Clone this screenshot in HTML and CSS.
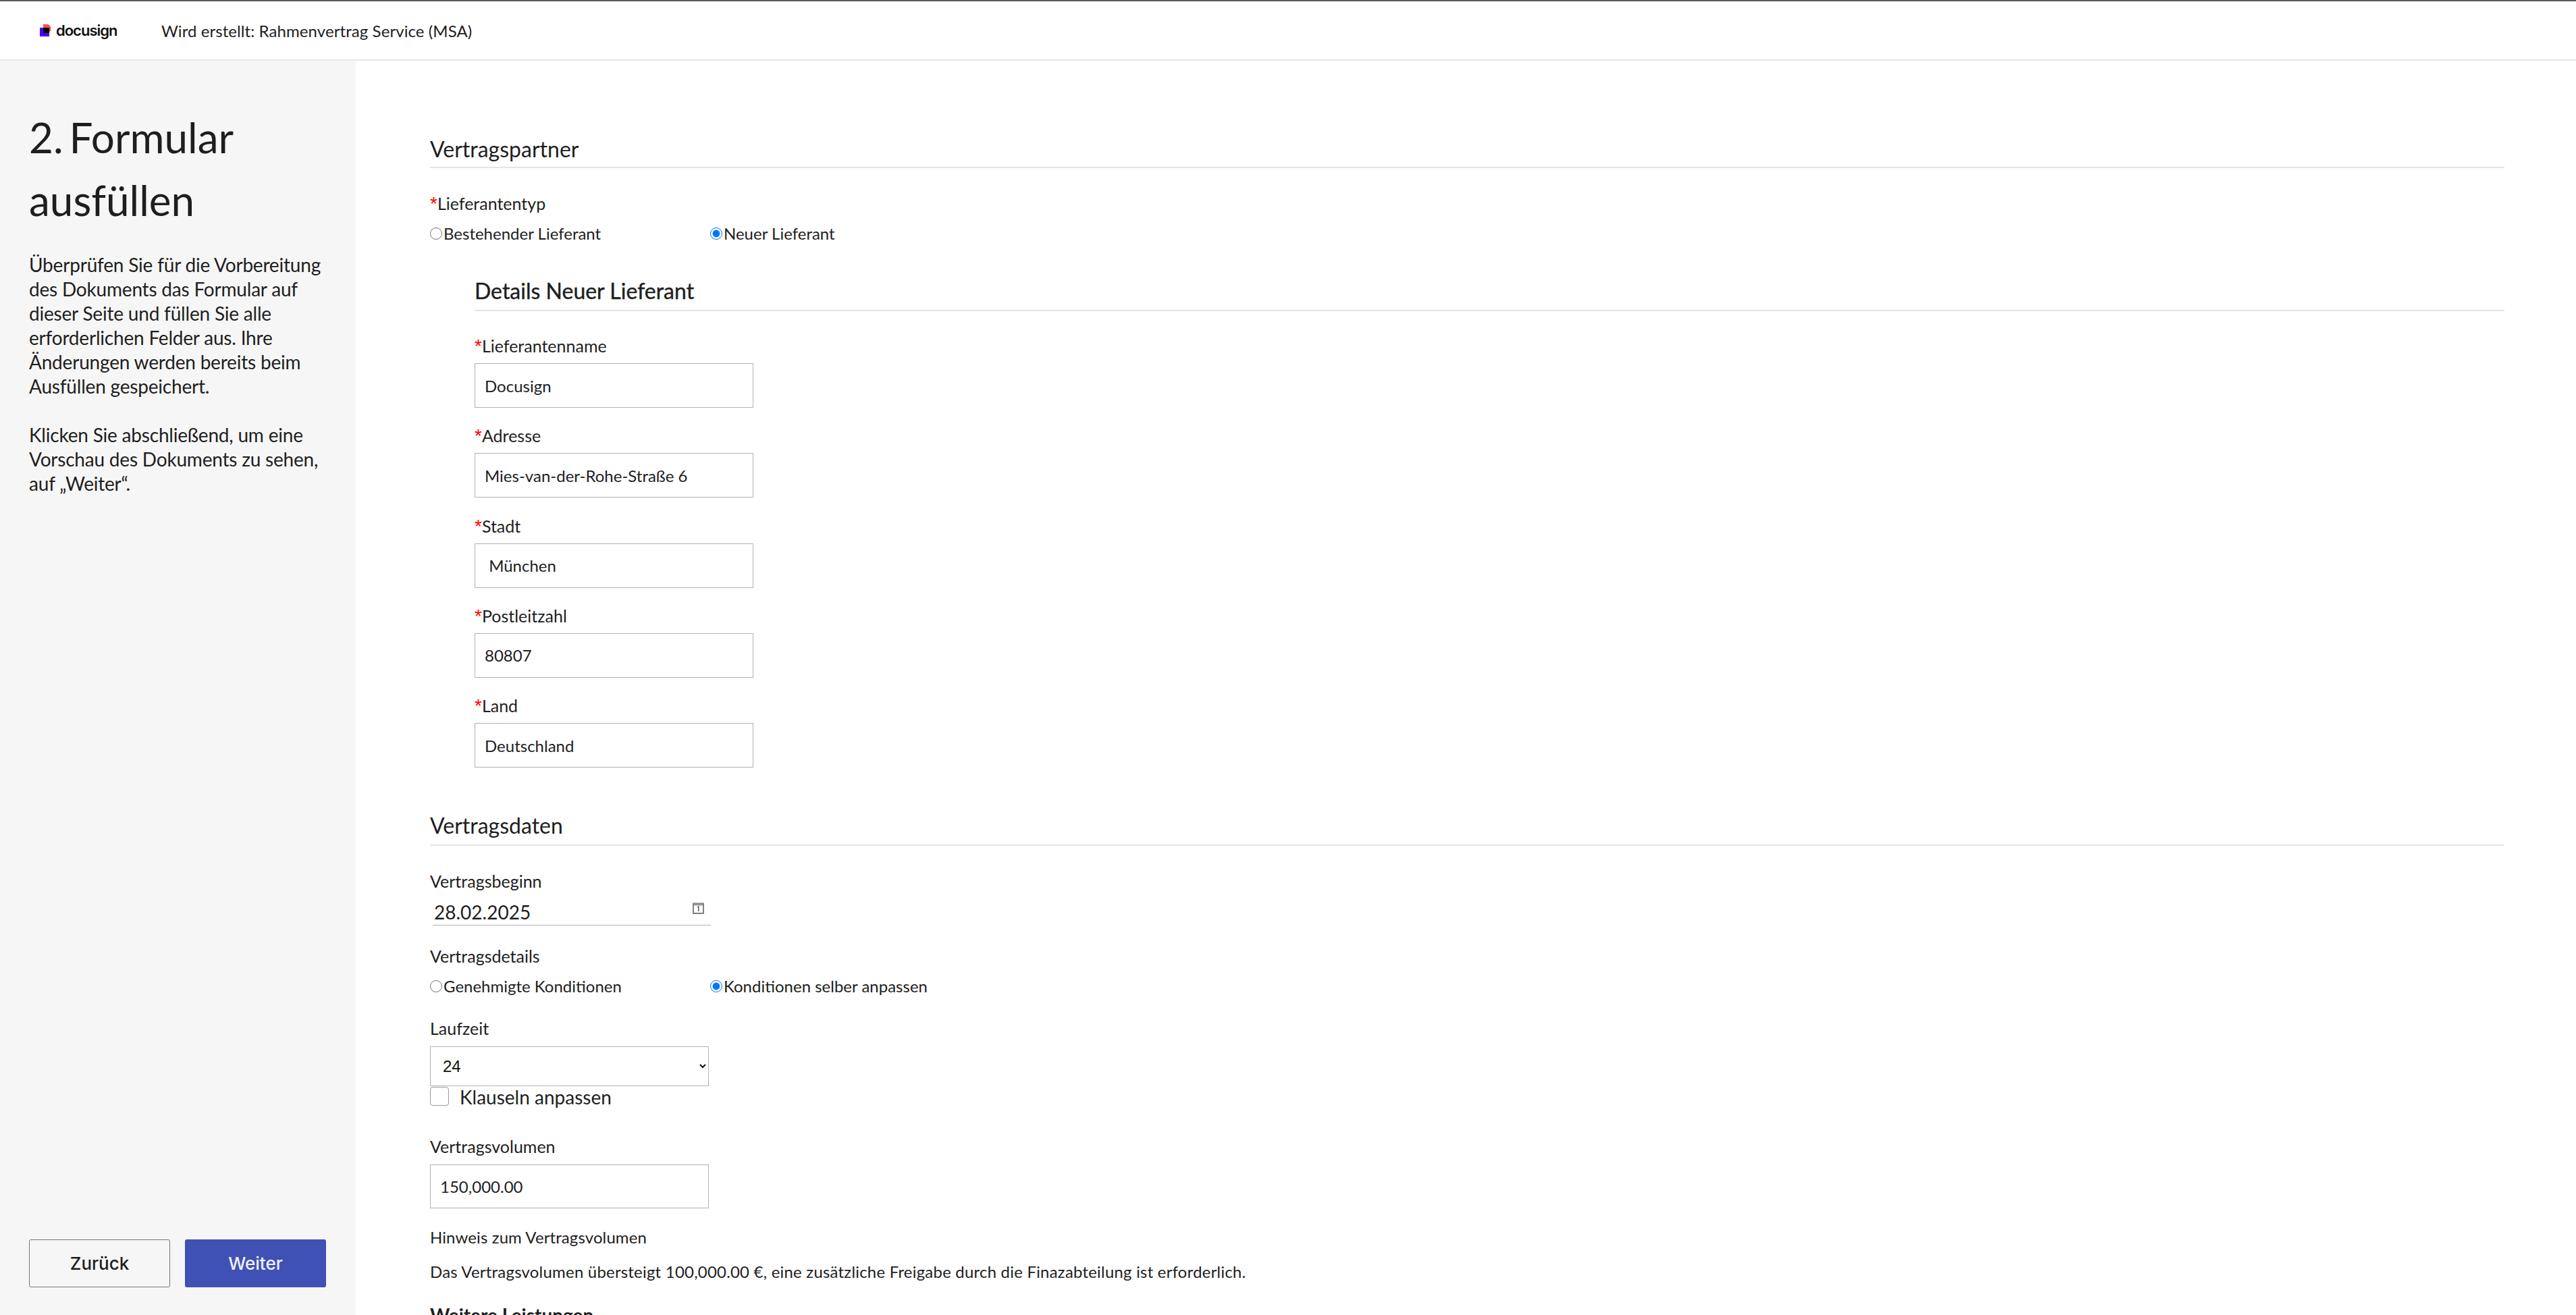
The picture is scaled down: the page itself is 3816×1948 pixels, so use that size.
FILE: index.html
```html
<!DOCTYPE html>
<html lang="de">
<head>
    <meta charset="UTF-8">
    <title>Wird erstellt: Rahmenvertrag Service (MSA)</title>
    <link rel="stylesheet" href="styles.css">
</head>
<body>
    <header class="top-bar">
        <div class="logo">
            <svg class="logo-mark" width="20" height="18" viewBox="0 0 20 18">
                <path d="M5 0h7a7 7 0 0 1 0 13H5z" fill="#ff5252"/>
                <rect x="0" y="5" width="14" height="13" fill="#4c00ff"/>
                <path d="M5 5h9v8H5z" fill="#000"/>
            </svg>
            <span class="logo-text">docusign</span>
        </div>
        <div class="doc-title">Wird erstellt: Rahmenvertrag Service (MSA)</div>
    </header>

    <div class="layout">
        <aside class="sidebar">
            <div>
                <h1>2. Formular ausfüllen</h1>
                <p class="intro">Überprüfen Sie für die Vorbereitung des Dokuments das Formular auf dieser Seite und füllen Sie alle erforderlichen Felder aus. Ihre Änderungen werden bereits beim Ausfüllen gespeichert.</p>
                <p class="intro">Klicken Sie abschließend, um eine Vorschau des Dokuments zu sehen, auf „Weiter“.</p>
            </div>
            <div class="sidebar-actions">
                <button type="button" class="btn btn-secondary">Zurück</button>
                <button type="button" class="btn btn-primary">Weiter</button>
            </div>
        </aside>

        <main class="form-area">
            <h3 class="section-title">Vertragspartner</h3>
            <div class="field-label first-label"><span class="req">*</span>Lieferantentyp</div>
            <div class="radio-group">
                <label class="radio-option"><input type="radio" name="typ">Bestehender Lieferant</label>
                <label class="radio-option"><input type="radio" name="typ" checked>Neuer Lieferant</label>
            </div>

            <section class="subsection">
                <h4 class="subsection-title">Details Neuer Lieferant</h4>
                <div class="text-field">
                    <div class="field-label"><span class="req">*</span>Lieferantenname</div>
                    <input type="text" class="text-input" value="Docusign">
                </div>
                <div class="text-field">
                    <div class="field-label"><span class="req">*</span>Adresse</div>
                    <input type="text" class="text-input" value="Mies-van-der-Rohe-Straße 6">
                </div>
                <div class="text-field">
                    <div class="field-label"><span class="req">*</span>Stadt</div>
                    <input type="text" class="text-input" value=" München">
                </div>
                <div class="text-field">
                    <div class="field-label"><span class="req">*</span>Postleitzahl</div>
                    <input type="text" class="text-input" value="80807">
                </div>
                <div class="text-field">
                    <div class="field-label"><span class="req">*</span>Land</div>
                    <input type="text" class="text-input" value="Deutschland">
                </div>
            </section>

            <h3 class="section-title contract-title">Vertragsdaten</h3>
            <div class="field-label first-label">Vertragsbeginn</div>
            <div class="date-field">
                <span class="date-value">28.02.2025</span>
                <svg class="date-icon" width="17" height="18" viewBox="0 0 17 18" fill="none" stroke="#808080">
                    <rect x="1" y="2.5" width="15" height="14.5" stroke-width="2"/>
                    <path d="M1 4.5h15" stroke-width="1.5"/>
                    <path d="M4.5 0v2M12.5 0v2" stroke-width="1" stroke="#bbb"/>
                    <path d="M7 8l1.8-1v7" stroke="#555" stroke-width="1.4"/>
                </svg>
            </div>

            <div class="field-label details-label">Vertragsdetails</div>
            <div class="radio-group">
                <label class="radio-option"><input type="radio" name="details">Genehmigte Konditionen</label>
                <label class="radio-option"><input type="radio" name="details" checked>Konditionen selber anpassen</label>
            </div>

            <div class="field-label term-label">Laufzeit</div>
            <select class="term-select">
                <option>24</option>
            </select>
            <label class="check-option"><input type="checkbox">Klauseln anpassen</label>

            <div class="field-label volume-label">Vertragsvolumen</div>
            <input type="text" class="text-input volume-input" value="150,000.00">

            <div class="note-label">Hinweis zum Vertragsvolumen</div>
            <p class="note">Das Vertragsvolumen übersteigt 100,000.00 €, eine zusätzliche Freigabe durch die Finazabteilung ist erforderlich.</p>
            <div class="more-title">Weitere Leistungen</div>
        </main>
    </div>
</body>
</html>
```

FILE: styles.css
```css
:root {
    --text-color: #1e1e1e;
    --line-color: #e4e4e4;
    --input-border: #b3b3b3;
    --primary-color: #4051b5;
}

* {
    box-sizing: border-box;
}

html, body {
    height: 100%;
}

body {
    margin: 0;
    font-family: Lato, "Noto Sans", sans-serif;
    color: var(--text-color);
    background-color: #fff;
    display: flex;
    flex-direction: column;
    overflow: hidden;
}

.top-bar {
    height: 90px;
    flex: none;
    display: flex;
    align-items: center;
    padding-left: 59px;
    border-top: 2px solid #5a5a5a;
    border-bottom: 2px solid #e6e6e6;
}

.logo {
    display: flex;
    align-items: center;
    gap: 4px;
    width: 180px;
}

.logo-mark {
    flex: none;
}

.logo-text {
    font-family: Inter, sans-serif;
    font-size: 22px;
    font-weight: 600;
    letter-spacing: -1px;
    color: #111;
}

.doc-title {
    font-size: 24px;
    letter-spacing: 0.08px;
}

.layout {
    flex: 1;
    display: flex;
    min-height: 0;
}

.sidebar {
    width: 527px;
    flex: none;
    background-color: #f6f6f6;
    padding: 0 44px 41px 43px;
    display: flex;
    flex-direction: column;
    justify-content: space-between;
}

h1 {
    margin: 67px 0 31px;
    font-size: 62px;
    line-height: 93px;
    font-weight: 400;
    word-spacing: -7px;
}

.intro {
    margin: 0 0 36px;
    font-size: 28px;
    line-height: 36px;
    letter-spacing: -0.2px;
}

.sidebar-actions {
    display: flex;
    gap: 22px;
}

.btn {
    width: 209px;
    height: 71px;
    border-radius: 3px;
    font-family: Inter, sans-serif;
    font-size: 26px;
    font-weight: 500;
}

.btn-secondary {
    background-color: transparent;
    border: 1.5px solid #777;
    color: var(--text-color);
}

.btn-primary {
    background-color: var(--primary-color);
    border: none;
    color: #f0f2ff;
}

.form-area {
    flex: 1;
    padding: 111px 106px 0 110px;
    overflow: hidden;
}

.section-title {
    margin: 0;
    padding-bottom: 6px;
    font-size: 32px;
    line-height: 40px;
    font-weight: 400;
    border-bottom: 2px solid var(--line-color);
}

.field-label {
    font-size: 25px;
    line-height: 32px;
}

.first-label {
    margin-top: 36px;
}

.req {
    font-family: "Liberation Sans", sans-serif;
    font-size: 28px;
    line-height: 0;
    color: #f00;
}

.radio-group {
    display: flex;
    margin-top: 13px;
    height: 32px;
}

.radio-option {
    width: 415px;
    display: flex;
    align-items: center;
    font-size: 24px;
    line-height: 32px;
}

.radio-option input {
    width: 18px;
    height: 18px;
    margin: 0 2px 0 0;
}

.subsection {
    margin: 49px 0 0 66px;
}

.subsection-title {
    margin: 0;
    padding-bottom: 8px;
    font-size: 32px;
    line-height: 40px;
    font-weight: 400;
    -webkit-text-stroke: 0.4px var(--text-color);
    border-bottom: 2px solid var(--line-color);
}

.text-field {
    margin-top: 25.25px;
}

.subsection-title + .text-field {
    margin-top: 35px;
}

.text-input {
    display: block;
    width: 413px;
    height: 66px;
    margin-top: 10px;
    padding: 0 14px;
    border: 1px solid var(--input-border);
    font-family: inherit;
    font-size: 24px;
    color: var(--text-color);
    background-color: #fff;
}

.contract-title {
    margin-top: 66px;
    padding-bottom: 8px;
}

.date-field {
    width: 412px;
    height: 40px;
    margin: 10px 0 0 4px;
    padding: 0 10px 0 2px;
    display: flex;
    justify-content: space-between;
    align-items: flex-start;
    border-bottom: 1px solid var(--input-border);
}

.date-value {
    font-size: 28px;
    line-height: 40px;
}

.date-icon {
    margin-top: 5px;
}

.details-label {
    margin-top: 29px;
}

.term-label {
    margin-top: 30px;
}

.term-select {
    display: block;
    width: 413px;
    height: 59px;
    margin-top: 11px;
    padding: 0 14px;
    border: 1px solid var(--input-border);
    border-radius: 0;
    font-family: "Liberation Sans", sans-serif;
    font-size: 24px;
    color: #111;
    background-color: #fff;
}

.check-option {
    display: flex;
    align-items: flex-start;
    gap: 16px;
    font-size: 28px;
    line-height: 32px;
}

.check-option input {
    appearance: none;
    width: 28px;
    height: 28px;
    margin: 1px 0 0;
    border: 1px solid #999;
    border-radius: 4px;
    background-color: #fff;
}

.volume-label {
    margin-top: 41px;
}

.volume-input {
    height: 65px;
    margin-top: 11px;
}

.note-label {
    margin-top: 27px;
    font-size: 24px;
    line-height: 32px;
    letter-spacing: 0.1px;
}

.note {
    margin: 19px 0 0;
    font-size: 24px;
    line-height: 32px;
    letter-spacing: 0.2px;
}

.more-title {
    margin-top: 30px;
    font-size: 28px;
    line-height: 36px;
    font-weight: 700;
}
```
